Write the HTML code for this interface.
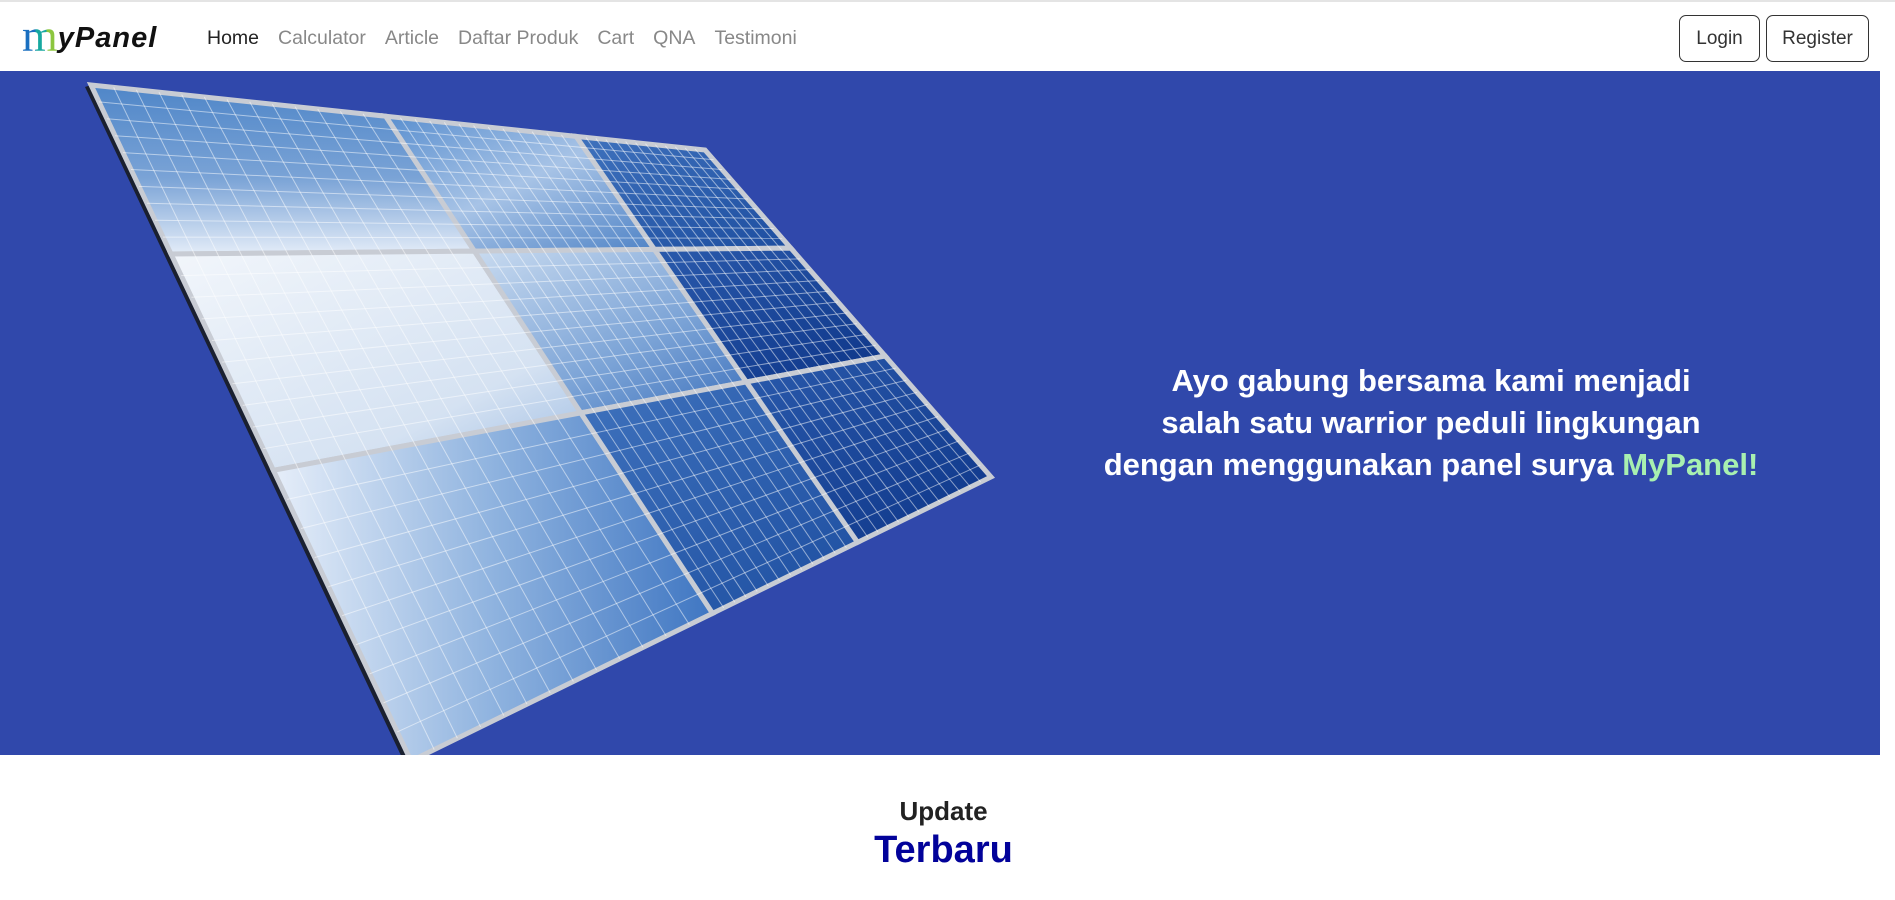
<!DOCTYPE html>
<html><head><meta charset="utf-8"><style>
*{margin:0;padding:0;box-sizing:border-box}
body{width:1895px;height:900px;overflow:hidden;background:#fff;font-family:"Liberation Sans",sans-serif;position:relative}
.nav{position:absolute;left:0;top:0;width:1895px;height:71px;border-top:2px solid #e4e4e4;background:#fff}
.logo{position:absolute;left:22px;top:12px;font-family:"Liberation Serif",serif;font-size:46px;line-height:44px}
.logo .m{background:linear-gradient(90deg,#1a6fc0 0 38%,#16a8a0 38% 68%,#8cc63f 68%);-webkit-background-clip:text;background-clip:text;color:transparent}
.logo b{font-family:"Liberation Sans",sans-serif;font-style:italic;font-weight:bold;font-size:29px;color:#111;position:relative;top:-4px;letter-spacing:1px}
.links{position:absolute;left:207px;top:25px;font-size:19.5px;color:#888;white-space:nowrap}
.links span{margin-right:19px}
.btn{position:absolute;top:13px;height:47px;border:1px solid #333;border-radius:7px;font-size:19px;color:#333;text-align:center;line-height:45px}
.hero{position:absolute;left:0;top:71px;width:1880px;height:684px;background:#3048ab;overflow:hidden}
.ht{position:absolute;left:1031px;top:289px;width:800px;text-align:center;color:#fff;font-size:31px;font-weight:bold;line-height:42px;white-space:nowrap}
.h2{position:absolute;top:796px;width:100%;left:-4px;text-align:center}
</style></head><body>
<div class="nav">
<div class="logo"><span class="m">m</span><b>yPanel</b></div>
<div class="links"><span style="color:#222">Home</span><span>Calculator</span><span>Article</span><span>Daftar Produk</span><span>Cart</span><span>QNA</span><span>Testimoni</span></div>
<div class="btn" style="left:1679px;width:81px">Login</div>
<div class="btn" style="left:1766px;width:103px">Register</div>
</div>
<div class="hero">
<svg id="sv" width="1100" height="900" style="position:absolute;left:0;top:-71px">
<defs>
<linearGradient id="g1" x1="0" y1="0" x2="0" y2="1"><stop offset="0" stop-color="#4f86c8"/><stop offset=".55" stop-color="#7aa3d6"/><stop offset="1" stop-color="#e3ecf8"/></linearGradient>
<linearGradient id="g6" x1="0" y1="0" x2="1" y2="1"><stop offset="0" stop-color="#5a8fcf"/><stop offset=".5" stop-color="#a7c3e6"/><stop offset="1" stop-color="#4f83c6"/></linearGradient>
<linearGradient id="g2" x1="0" y1="0" x2="1" y2="1"><stop offset="0" stop-color="#f2f6fb"/><stop offset=".7" stop-color="#d5e2f2"/><stop offset="1" stop-color="#9fbde3"/></linearGradient>
<linearGradient id="g5" x1="0" y1="0" x2="1" y2="0"><stop offset="0" stop-color="#e6eef9"/><stop offset=".5" stop-color="#8fb3df"/><stop offset="1" stop-color="#3f76c2"/></linearGradient>
<linearGradient id="g7" x1="0" y1="0" x2="1" y2="1"><stop offset="0" stop-color="#c9dbf0"/><stop offset=".6" stop-color="#7ba3d6"/><stop offset="1" stop-color="#3e72bd"/></linearGradient>
<linearGradient id="g3" x1="0" y1="0" x2="1" y2="1"><stop offset="0" stop-color="#3f72bd"/><stop offset="1" stop-color="#1d4ea0"/></linearGradient>
<linearGradient id="g4" x1="0" y1="0" x2="1" y2="1"><stop offset="0" stop-color="#2a5aac"/><stop offset="1" stop-color="#0d3588"/></linearGradient>
</defs>
</svg>
<div class="ht">Ayo gabung bersama kami menjadi<br>salah satu warrior peduli lingkungan<br>dengan menggunakan panel surya <span style="color:#a8f0b0">MyPanel!</span></div>
</div>
<div class="h2" style="font-size:26px;color:#222;font-weight:bold">Update</div>
<div class="h2" style="top:829px;font-size:38px;color:#02029a;font-weight:bold">Terbaru</div>
<script>
var TL=[91,85],TR=[705,150],BR=[991,477],BL=[411,761];
function L(a,b,t){return [a[0]+(b[0]-a[0])*t,a[1]+(b[1]-a[1])*t];}
var ct=[0,0.48,0.79,1],cb=[0,0.52,0.77,1],rl=[0,0.25,0.57,1],rr=[0,0.3,0.63,1];
function X(p1,p2,p3,p4){var d=(p1[0]-p2[0])*(p3[1]-p4[1])-(p1[1]-p2[1])*(p3[0]-p4[0]);var a=p1[0]*p2[1]-p1[1]*p2[0],b=p3[0]*p4[1]-p3[1]*p4[0];return [(a*(p3[0]-p4[0])-(p1[0]-p2[0])*b)/d,(a*(p3[1]-p4[1])-(p1[1]-p2[1])*b)/d];}
function col(u){var i=0;while(i<2&&u>1/3*(i+1))i++;var f=(u-i/3)*3;return [L(TL,TR,ct[i]+(ct[i+1]-ct[i])*f),L(BL,BR,cb[i]+(cb[i+1]-cb[i])*f)];}
function row(v){var i=0;while(i<2&&v>1/3*(i+1))i++;var f=(v-i/3)*3;return [L(TL,BL,rl[i]+(rl[i+1]-rl[i])*f),L(TR,BR,rr[i]+(rr[i+1]-rr[i])*f)];}
function P(u,v){var c=col(u),r=row(v);return X(c[0],c[1],r[0],r[1]);}
var s='';
s+='<polygon points="'+(TL[0]-6)+','+(TL[1]+2)+' '+TL+' '+BL+' '+(BL[0]-6)+','+(BL[1]+3)+'" fill="#1a2030"/>';
var fills=[['url(#g1)','url(#g6)','url(#g3)'],['url(#g2)','url(#g7)','url(#g4)'],['url(#g5)','url(#g3)','url(#g4)']];
for(var j=0;j<3;j++)for(var i=0;i<3;i++){var a=P(i/3,j/3),b=P((i+1)/3,j/3),c=P((i+1)/3,(j+1)/3),d=P(i/3,(j+1)/3);
s+='<polygon points="'+a+' '+b+' '+c+' '+d+'" fill="'+fills[j][i]+'" stroke="#c8ccd4" stroke-width="5"/>';}
var N=39,M=30;
for(var k=1;k<N;k++){if(k%13==0)continue;var a=P(k/N,0),b=P(k/N,1);s+='<line x1="'+a[0]+'" y1="'+a[1]+'" x2="'+b[0]+'" y2="'+b[1]+'" stroke="#fff" stroke-opacity=".5" stroke-width="1"/>';}
for(var k=1;k<M;k++){if(k%10==0)continue;var a=P(0,k/M),b=P(1,k/M);s+='<line x1="'+a[0]+'" y1="'+a[1]+'" x2="'+b[0]+'" y2="'+b[1]+'" stroke="#fff" stroke-opacity=".5" stroke-width="1"/>';}
document.getElementById('sv').insertAdjacentHTML('beforeend',s);
</script>
</body></html>
